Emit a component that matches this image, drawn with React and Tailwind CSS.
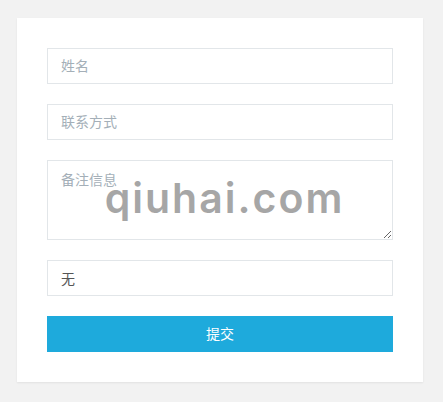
import React from 'react';

const field =
  'block w-full h-9 border border-[#e2e6e9] bg-white px-[13px] text-[14px] text-[#555] outline-none placeholder:text-[#a4afb8]';

export default function App() {
  return (
    <div
      className="min-h-[402px] bg-[#f2f2f2] pt-[18px] pl-[17px]"
      style={{ fontFamily: '"Liberation Sans", "Noto Sans CJK SC", sans-serif' }}
    >
      <div className="relative w-[406px] bg-white px-[30px] py-[30px] shadow-[0_1px_2px_rgba(0,0,0,0.07)]">
        <form className="flex flex-col gap-5" onSubmit={(e) => e.preventDefault()}>
          <input className={field} placeholder="姓名" />
          <input className={field} placeholder="联系方式" />
          <textarea
            className="block w-full h-20 border border-[#e2e6e9] bg-white px-[13px] py-[9px] text-[14px] leading-[20px] text-[#555] outline-none placeholder:text-[#a4afb8]"
            placeholder="备注信息"
          />
          <input className={field} defaultValue="无" readOnly />
          <button
            type="submit"
            className="h-9 w-full bg-[#1eaadc] text-[14px] text-white"
          >
            提交
          </button>
        </form>

        {/* watermark */}
        <div
          className="pointer-events-none absolute left-0 right-0 top-[160px] pl-[9px] text-center text-[41px] font-semibold leading-none tracking-[2px] text-[#a6a6a6]"
          style={{ fontFamily: 'Inter, sans-serif' }}
        >
          qiuhai.com
        </div>
      </div>
    </div>
  );
}
